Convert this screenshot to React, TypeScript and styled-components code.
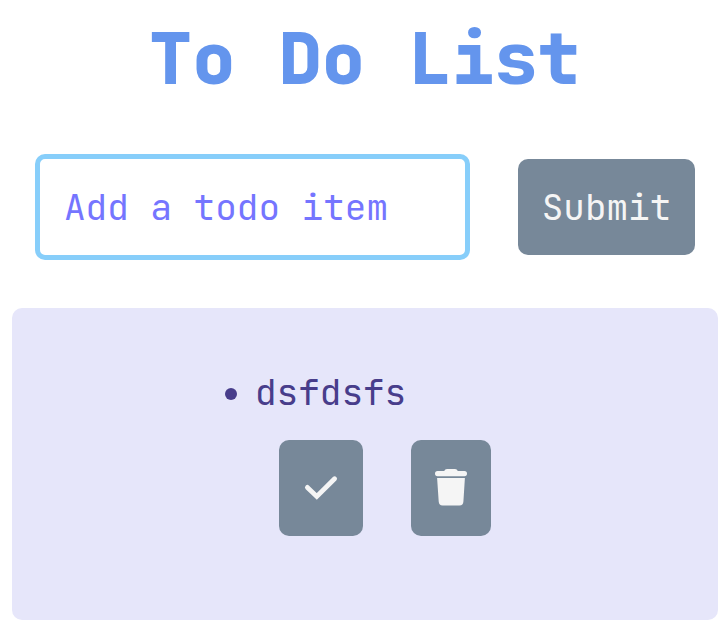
import React from "react";
import styled, { createGlobalStyle } from "styled-components";

const GlobalStyle = createGlobalStyle`
  * { box-sizing: border-box; }
  body {
    margin: 0;
    background: #fff;
    font-family: "JetBrains Mono", "DejaVu Sans Mono", monospace;
    font-size: 36px;
  }
`;

const Page = styled.main`
  height: 640px;
  padding: 12px 9px 20px 12px;
  display: flex;
  flex-direction: column;
  overflow: hidden;
`;

const Title = styled.h1`
  margin: 0;
  height: 94px;
  line-height: 94px;
  font-size: 72px;
  font-weight: 800;
  text-align: center;
  white-space: nowrap;
  color: cornflowerblue;
`;

const Form = styled.form`
  display: flex;
  align-items: center;
  gap: 48px;
  height: 106px;
  margin: 48px 0 48px 23px;
`;

const TextInput = styled.input`
  width: 435px;
  height: 106px;
  padding: 0 24px;
  border: 5px solid lightskyblue;
  border-radius: 10px;
  background: #fff;
  color: #7575ff;
  font: inherit;
  outline: none;

  &::placeholder {
    color: #7575ff;
    opacity: 1;
  }
`;

const Button = styled.button<{ $width: number }>`
  display: flex;
  align-items: center;
  justify-content: center;
  width: ${(p) => p.$width}px;
  height: 96px;
  padding: 0;
  border: 0;
  border-radius: 10px;
  background: lightslategray;
  color: whitesmoke;
  font: inherit;
`;

const Panel = styled.section`
  flex: 1;
  padding: 60px 0 0 244px;
  border-radius: 10px;
  background: #e6e6fa;
  color: darkslateblue;
`;

const List = styled.ul`
  margin: 0;
  padding: 0;
  list-style: none;
`;

const ItemText = styled.div`
  display: flex;
  align-items: center;
  height: 48px;
  margin-left: -31px;
  gap: 18px;

  &::before {
    content: "";
    width: 12px;
    height: 12px;
    margin-top: 3px;
    border-radius: 50%;
    background: currentColor;
  }
`;

const Actions = styled.div`
  display: flex;
  gap: 48px;
  margin: 24px 0 0 23px;
`;

const CheckIcon = () => (
  <svg width="36" height="36" viewBox="0 0 36 36" fill="none" aria-hidden="true">
    <path d="M4.4 17.4 L13.8 26.4 L31.6 8.8" stroke="currentColor" strokeWidth="4.8" strokeLinecap="round" />
  </svg>
);

const TrashIcon = () => (
  <svg width="32" height="40" viewBox="0 0 32 40" fill="currentColor" aria-hidden="true">
    <path d="M2.5 3H9.2Q10 1.1 12 1.1H20Q22 1.1 22.8 3H29.5Q32 3 32 5.6Q32 8.2 29.5 8.2H2.5Q0 8.2 0 5.6Q0 3 2.5 3Z" />
    <path d="M2.1 10H29.9L28.4 33.6Q28.2 37.6 24.5 37.6H7.5Q4 37.6 3.7 33.6Z" />
  </svg>
);

export default function App() {
  return (
    <>
      <GlobalStyle />
      <Page>
        <Title>To Do List</Title>
        <Form onSubmit={(e) => e.preventDefault()}>
          <TextInput placeholder="Add a todo item" />
          <Button type="submit" $width={177}>Submit</Button>
        </Form>
        <Panel>
          <List>
            <li>
              <ItemText>dsfdsfs</ItemText>
              <Actions>
                <Button $width={84} aria-label="Complete"><CheckIcon /></Button>
                <Button $width={80} aria-label="Delete"><TrashIcon /></Button>
              </Actions>
            </li>
          </List>
        </Panel>
      </Page>
    </>
  );
}
